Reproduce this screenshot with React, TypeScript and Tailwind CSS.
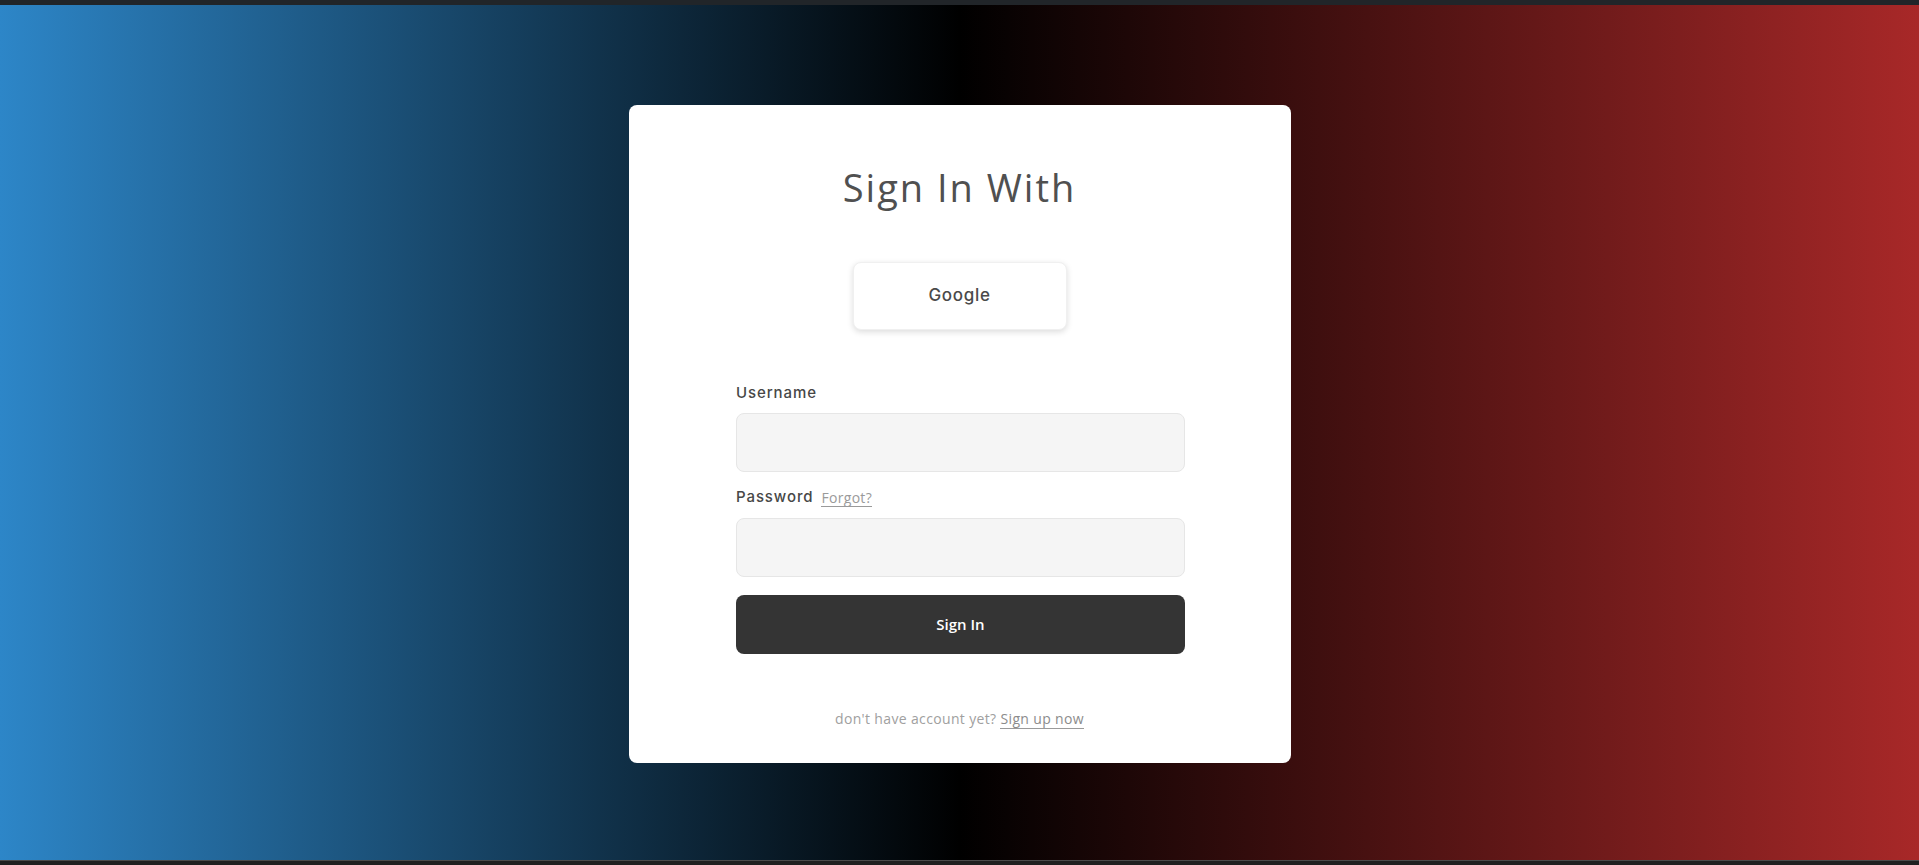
import React from 'react';

export default function App() {
  return (
    <div className="h-screen flex flex-col bg-[#202020]" style={{ fontFamily: '"Open Sans", "Noto Sans", sans-serif' }}>
      {/* Top strip */}
      <div className="h-[5px] bg-[#212529]"></div>

      {/* Gradient stage */}
      <div className="flex-1 flex items-center justify-center bg-[linear-gradient(to_right,#2d86c8,#000000,#a82828)]">
        <div className="w-[662px] bg-white rounded-[8px] pt-[59px] pb-[34px] translate-y-[1px]">
          <h1 className="text-center text-[38px] leading-[46px] text-[#505050] font-normal tracking-[2px]">
            Sign In With
          </h1>

          <div className="flex justify-center mt-[52px]">
            <button className="w-[214px] h-[68px] rounded-[8px] bg-white border border-[#f0f0f0] shadow-[0_2px_6px_rgba(0,0,0,0.14)] text-[17px] font-medium tracking-[0.7px] text-[#4a4a4a] font-['Inter',sans-serif]">
              Google
            </button>
          </div>

          <form className="w-[449px] mx-auto mt-[53px] translate-x-[1px]" onSubmit={(e) => e.preventDefault()}>
            <label className="block text-[15px] leading-[20px] font-medium tracking-[0.9px] text-[#474747] font-['Inter',sans-serif]">
              Username
            </label>
            <input
              type="text"
              className="block w-full h-[59px] mt-[10px] rounded-[8px] bg-[#f5f5f5] border border-[#e6e6e6] outline-none px-4"
            />

            <div className="flex items-end gap-[8px] mt-[15px] h-[20px]">
              <label className="text-[15px] leading-[20px] font-medium tracking-[0.9px] text-[#474747] font-['Inter',sans-serif]">Password</label>
              <a href="#" className="text-[14px] leading-[17px] tracking-[0.3px] text-[#9a9a9a] border-b border-[#9a9a9a]">
                Forgot?
              </a>
            </div>
            <input
              type="password"
              className="block w-full h-[59px] mt-[11px] rounded-[8px] bg-[#f5f5f5] border border-[#e6e6e6] outline-none px-4"
            />

            <button
              type="submit"
              className="block w-full h-[59px] mt-[18px] rounded-[8px] bg-[#343434] text-white text-[15px] font-semibold"
            >
              Sign In
            </button>
          </form>

          <p className="mt-[55px] text-center text-[14px] leading-[20px] tracking-[0.35px] text-[#a0a0a0]">
            don't have account yet?{' '}
            <a href="#" className="text-[#8c8c8c] border-b border-[#9a9a9a]">
              Sign up now
            </a>
          </p>
        </div>
      </div>

      {/* Bottom strip */}
      <div className="h-[5px] border-t border-[#4b4b4b] bg-[#202020]"></div>
    </div>
  );
}
